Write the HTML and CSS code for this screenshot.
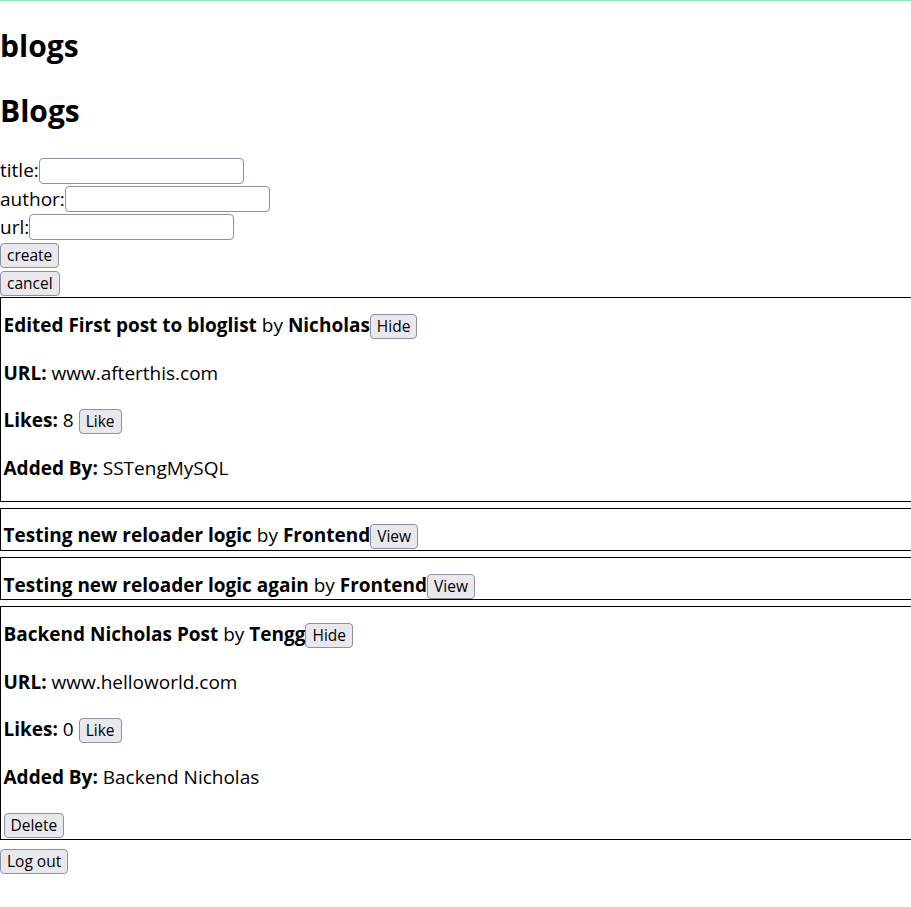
FILE: index.html
```html
<!DOCTYPE html>
<html lang="en">
<head>
<meta charset="utf-8">
<title>blogs</title>
<link rel="stylesheet" href="styles.css">
</head>
<body>
<div class="app">
  <div class="notice"></div>
  <h2 class="title">blogs</h2>
  <h2 class="title">Blogs</h2>
  <form class="form">
    <div class="row">title:<input class="field" type="text"></div>
    <div class="row">author:<input class="field" type="text"></div>
    <div class="row">url:<input class="field" type="text"></div>
    <div class="row"><button class="btn" type="button">create</button></div>
    <div class="row"><button class="btn" type="button">cancel</button></div>
  </form>
  <div class="blog">
    <div class="head"><strong>Edited First post to bloglist</strong> by <strong>Nicholas</strong><button class="btn" type="button">Hide</button></div>
    <p class="line"><strong>URL:</strong> www.afterthis.com</p>
    <p class="line tall"><strong>Likes:</strong> 8 <button class="btn" type="button">Like</button></p>
    <p class="line"><strong>Added By:</strong> SSTengMySQL</p>
  </div>
  <div class="blog">
    <div class="head"><strong>Testing new reloader logic</strong> by <strong>Frontend</strong><button class="btn" type="button">View</button></div>
  </div>
  <div class="blog">
    <div class="head"><strong>Testing new reloader logic again</strong> by <strong>Frontend</strong><button class="btn" type="button">View</button></div>
  </div>
  <div class="blog">
    <div class="head"><strong>Backend Nicholas Post</strong> by <strong>Tengg</strong><button class="btn" type="button">Hide</button></div>
    <p class="line"><strong>URL:</strong> www.helloworld.com</p>
    <p class="line tall"><strong>Likes:</strong> 0 <button class="btn" type="button">Like</button></p>
    <p class="line"><strong>Added By:</strong> Backend Nicholas</p>
    <div class="actions"><button class="btn" type="button">Delete</button></div>
  </div>
  <div class="actions"><button class="btn" type="button">Log out</button></div>
</div>
</body>
</html>
```

FILE: styles.css
```css
html, body {
  margin: 0;
  padding: 0;
  overflow-x: hidden;
  background: #ffffff;
}

body {
  font-family: "Open Sans", "Noto Sans", sans-serif;
  font-size: 19px;
  line-height: 26.6px;
  color: #000000;
}

.notice {
  height: 1px;
  background: #95e1b8;
}

.title {
  font-size: 30px;
  line-height: 40px;
  font-weight: 700;
  margin: 25px 0;
}

.form {
  margin: 0;
}

.row {
  display: flex;
  align-items: center;
  height: 28px;
}

.row:first-child {
  height: 29px;
}

.field {
  box-sizing: border-box;
  width: 205px;
  height: 26px;
  margin: 0;
  padding: 0 3px;
  border: 1px solid #8f8f9d;
  border-radius: 4px;
  background: #ffffff;
  font: inherit;
}

.btn {
  box-sizing: border-box;
  height: 25px;
  margin: 0;
  padding: 0 6px;
  border: 1px solid #8f8f9d;
  border-radius: 4px;
  background: #e9e9ed;
  color: #000000;
  font-family: "Open Sans", "Noto Sans", sans-serif;
  font-size: 15.5px;
  line-height: 21px;
}

.blog {
  width: calc(100% + 40px);
  border: 1px solid #000000;
  padding: 12.5px 0 0 2.5px;
  margin-bottom: 6.25px;
}

.line {
  margin: 20px 0;
  padding-top: 1.5px;
  line-height: 25.1px;
}

.head,
.actions {
  line-height: 28.5px;
}

.line.tall {
  padding-top: 0;
  line-height: 28.5px;
}
```
